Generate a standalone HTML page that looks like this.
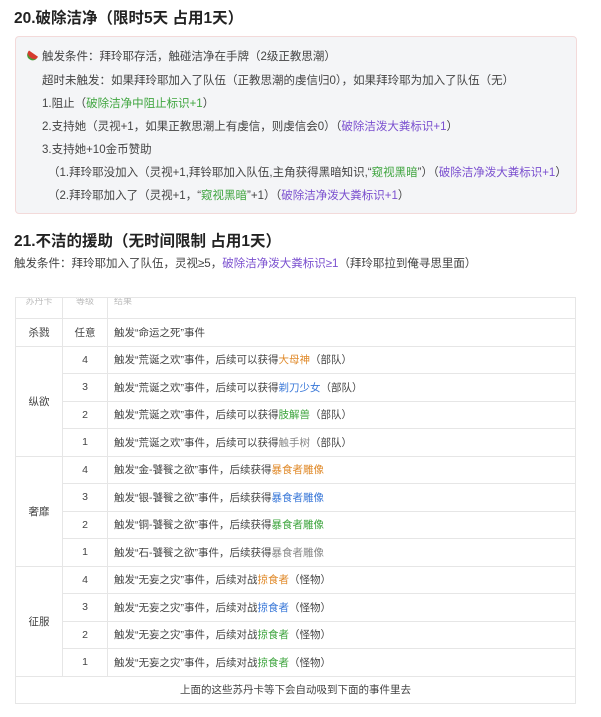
<!DOCTYPE html>
<html><head><meta charset="utf-8"><style>
*{margin:0;padding:0;box-sizing:border-box}
body{width:601px;height:717px;background:#fff;font-family:"Liberation Sans","Noto Sans CJK SC",sans-serif;color:#333;position:relative;overflow:hidden}
.h{position:absolute;left:14px;font-size:15.5px;font-weight:bold;color:#222}
.box{position:absolute;left:15px;top:36px;width:562px;height:178px;background:#f4f5f7;border:1px solid #f3dada;border-radius:4px}
.l{position:absolute;font-size:11.5px;color:#444;white-space:nowrap}
.g{color:#3fa53f}.p{color:#7a4fcf}.o{color:#e08a2a}.b{color:#3a78d8}.gr{color:#888}
table{position:absolute;left:15px;top:297px;width:561px;border-collapse:collapse;font-size:10.5px;color:#444}
td{border:1px solid #e6e6e6;height:27.5px}
td.c{text-align:center}
td.t{padding-left:6px}
tr.hd td{height:21px;color:#bbb;font-size:9px;vertical-align:top;overflow:hidden;line-height:6px}
</style></head><body>
<div class="h" style="top:6px">20.破除洁净（限时5天 占用1天）</div>
<div class="box"></div>
<div class="l" style="left:26px;top:48px"><span style="display:inline-block;width:11px;height:7px;background:#d63b2e;border-radius:0 0 8px 8px;border-bottom:2px solid #4a9a3a;transform:rotate(35deg);margin-right:5px"></span>触发条件：拜玲耶存活，触碰洁净在手牌（2级正教思潮）</div>
<div class="l" style="left:42px;top:72px">超时未触发：如果拜玲耶加入了队伍（正教思潮的虔信归0），如果拜玲耶为加入了队伍（无）</div>
<div class="l" style="left:42px;top:95px">1.阻止（<span class="g">破除洁净中阻止标识+1</span>）</div>
<div class="l" style="left:42px;top:118px">2.支持她（灵视+1，如果正教思潮上有虔信，则虔信会0）（<span class="p">破除洁泼大粪标识+1</span>）</div>
<div class="l" style="left:42px;top:141px">3.支持她+10金币赞助</div>
<div class="l" style="left:48px;top:164px">（1.拜玲耶没加入（灵视+1,拜铃耶加入队伍,主角获得黑暗知识,“<span class="g">窥视黑暗</span>”）（<span class="p">破除洁净泼大粪标识+1</span>）</div>
<div class="l" style="left:48px;top:187px">（2.拜玲耶加入了（灵视+1，“<span class="g">窥视黑暗</span>”+1）（<span class="p">破除洁净泼大粪标识+1</span>）</div>
<div class="h" style="top:229px">21.不洁的援助（无时间限制 占用1天）</div>
<div class="l" style="left:14px;top:255px">触发条件：拜玲耶加入了队伍，灵视≥5，<span class="p">破除洁净泼大粪标识≥1</span>（拜玲耶拉到俺寻思里面）</div>
<table>
<tr class="hd"><td class="c" style="width:47px">苏丹卡</td><td class="c" style="width:45px">等级</td><td class="t">结果</td></tr>
<tr><td class="c">杀戮</td><td class="c">任意</td><td class="t">触发“命运之死”事件</td></tr>
<tr><td class="c" rowspan="4">纵欲</td><td class="c">4</td><td class="t">触发“荒诞之欢”事件，后续可以获得<span class="o">大母神</span>（部队）</td></tr>
<tr><td class="c">3</td><td class="t">触发“荒诞之欢”事件，后续可以获得<span class="b">剃刀少女</span>（部队）</td></tr>
<tr><td class="c">2</td><td class="t">触发“荒诞之欢”事件，后续可以获得<span class="g">肢解兽</span>（部队）</td></tr>
<tr><td class="c">1</td><td class="t">触发“荒诞之欢”事件，后续可以获得<span class="gr">触手树</span>（部队）</td></tr>
<tr><td class="c" rowspan="4">奢靡</td><td class="c">4</td><td class="t">触发“金-饕餮之欲”事件，后续获得<span class="o">暴食者雕像</span></td></tr>
<tr><td class="c">3</td><td class="t">触发“银-饕餮之欲”事件，后续获得<span class="b">暴食者雕像</span></td></tr>
<tr><td class="c">2</td><td class="t">触发“铜-饕餮之欲”事件，后续获得<span class="g">暴食者雕像</span></td></tr>
<tr><td class="c">1</td><td class="t">触发“石-饕餮之欲”事件，后续获得<span class="gr">暴食者雕像</span></td></tr>
<tr><td class="c" rowspan="4">征服</td><td class="c">4</td><td class="t">触发“无妄之灾”事件，后续对战<span class="o">掠食者</span>（怪物）</td></tr>
<tr><td class="c">3</td><td class="t">触发“无妄之灾”事件，后续对战<span class="b">掠食者</span>（怪物）</td></tr>
<tr><td class="c">2</td><td class="t">触发“无妄之灾”事件，后续对战<span class="g">掠食者</span>（怪物）</td></tr>
<tr><td class="c">1</td><td class="t">触发“无妄之灾”事件，后续对战<span class="g">掠食者</span>（怪物）</td></tr>
<tr><td class="c" colspan="3">上面的这些苏丹卡等下会自动吸到下面的事件里去</td></tr>
</table>
</body></html>
